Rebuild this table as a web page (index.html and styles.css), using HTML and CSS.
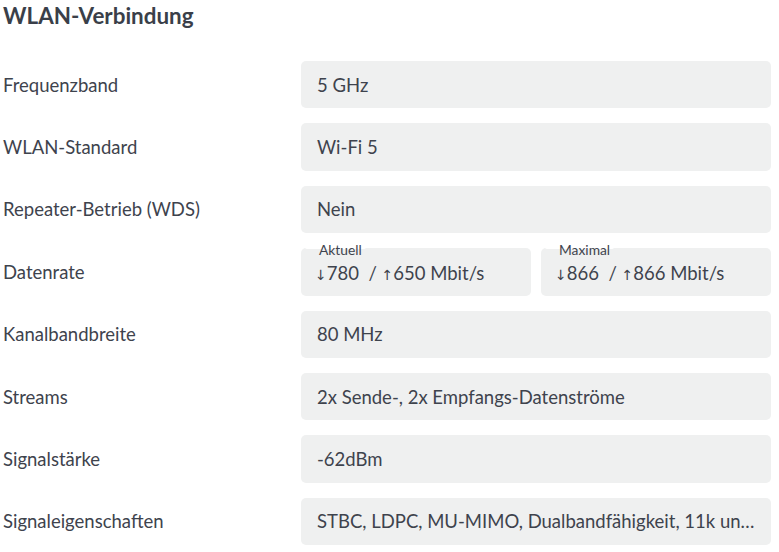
FILE: index.html
```html
<!DOCTYPE html>
<html lang="de">
<head>
<meta charset="utf-8">
<title>WLAN-Verbindung</title>
<link rel="stylesheet" href="styles.css">
</head>
<body>
<div class="page">
  <h1 class="title">WLAN-Verbindung</h1>
  <div class="rows">
    <div class="label">Frequenzband</div>
    <div class="box">5 GHz</div>

    <div class="label">WLAN-Standard</div>
    <div class="box">Wi-Fi 5</div>

    <div class="label">Repeater-Betrieb (WDS)</div>
    <div class="box">Nein</div>

    <div class="label">Datenrate</div>
    <div class="pair">
      <div class="box legend-box">
        <span class="legend">Aktuell</span>
        <span class="rate"><span class="arr">↓</span>780&nbsp; / <span class="arr">↑</span>650 Mbit/s</span>
      </div>
      <div class="box legend-box">
        <span class="legend">Maximal</span>
        <span class="rate"><span class="arr">↓</span>866&nbsp; / <span class="arr">↑</span>866 Mbit/s</span>
      </div>
    </div>

    <div class="label">Kanalbandbreite</div>
    <div class="box">80 MHz</div>

    <div class="label">Streams</div>
    <div class="box">2x Sende-, 2x Empfangs-Datenströme</div>

    <div class="label">Signalstärke</div>
    <div class="box">-62dBm</div>

    <div class="label">Signaleigenschaften</div>
    <div class="box"><span class="clip" title="STBC, LDPC, MU-MIMO, Dualbandfähigkeit, 11k und 11v">STBC, LDPC, MU-MIMO, Dualbandfähigkeit, 11k und 11v</span></div>
  </div>
</div>
</body>
</html>
```

FILE: styles.css
```css
html, body {
  margin: 0;
  padding: 0;
  background: #ffffff;
}

.page {
  padding: 0 8px 0 3px;
  font-family: "Lato", "Liberation Sans", sans-serif;
  color: #3e434d;
}

.title {
  margin: 0;
  padding-top: 1px;
  font-size: 22.4px;
  line-height: 29px;
  font-weight: 700;
  color: #3a3f49;
}

.rows {
  margin-top: 31px;
  display: grid;
  grid-template-columns: 298px 1fr;
  grid-auto-rows: 47.4px;
  row-gap: 15px;
  align-items: center;
}

.label {
  font-size: 18.5px;
}

.box {
  height: 100%;
  box-sizing: border-box;
  background: #eff0f0;
  border-radius: 5px;
  padding: 0 16px;
  display: flex;
  align-items: center;
  font-size: 18.5px;
  min-width: 0;
}

.pair {
  height: 100%;
  display: grid;
  grid-template-columns: 1fr 1fr;
  column-gap: 10px;
}

.legend-box {
  position: relative;
  padding: 0 14px;
}

.rate {
  padding-top: 2px;
}

.legend {
  position: absolute;
  top: -5px;
  left: 4px;
  padding: 0 4px 0 14px;
  background: #ffffff;
  font-size: 13.8px;
  line-height: 14px;
  height: 6px;
  overflow: visible;
  border-radius: 2px;
}

.arr {
  font-family: "DejaVu Sans", sans-serif;
  font-size: 14px;
}

.clip {
  display: block;
  overflow: hidden;
  white-space: nowrap;
  text-overflow: ellipsis;
  min-width: 0;
}
```
